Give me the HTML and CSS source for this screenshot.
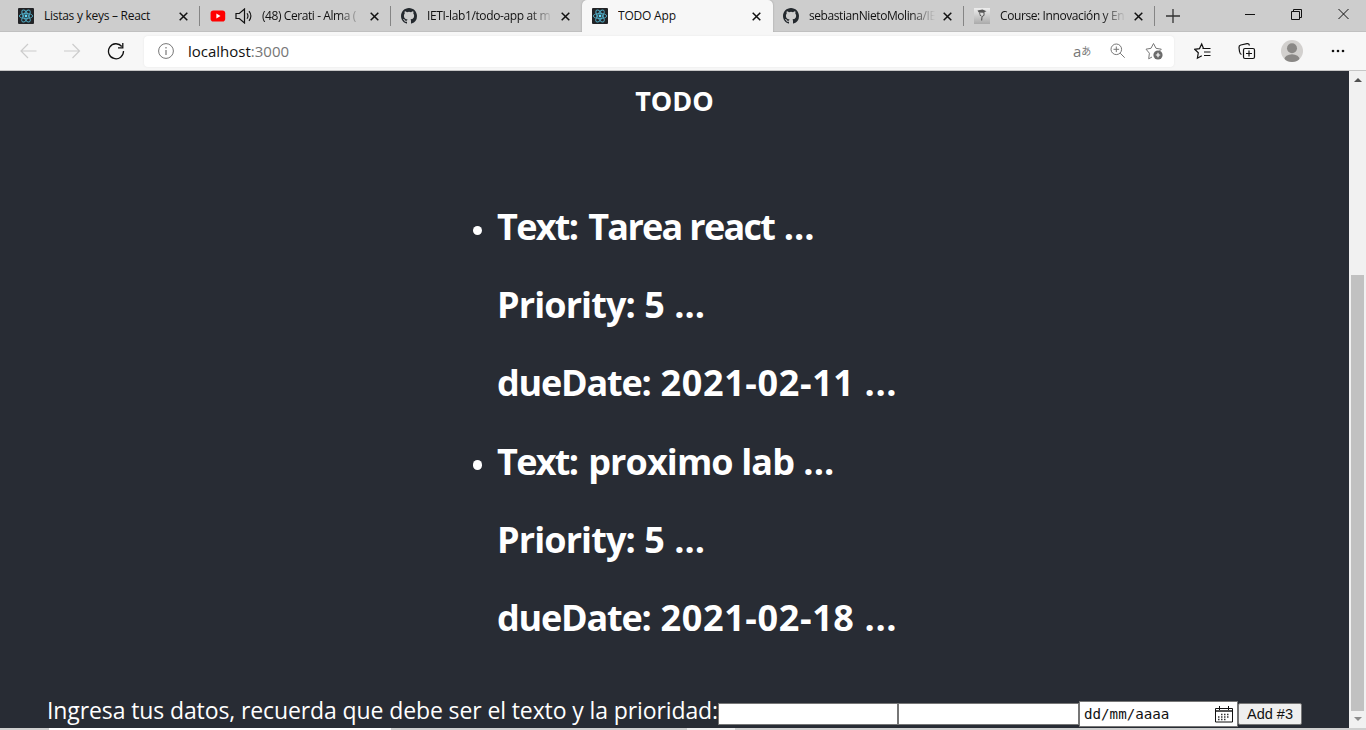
FILE: index.html
```html
<!DOCTYPE html>
<html lang="es">
<head>
<meta charset="utf-8">
<title>TODO App</title>
<link rel="stylesheet" href="styles.css">
</head>
<body>
<svg class="defs" width="0" height="0">
  <symbol id="react" viewBox="0 0 16 16"><rect width="16" height="16" rx="1" fill="#222326"/><g fill="none" stroke="#4fa9c2" stroke-width=".9"><ellipse cx="8" cy="8" rx="6.7" ry="2.6"/><ellipse cx="8" cy="8" rx="6.7" ry="2.6" transform="rotate(60 8 8)"/><ellipse cx="8" cy="8" rx="6.7" ry="2.6" transform="rotate(120 8 8)"/></g><circle cx="8" cy="8" r="1.4" fill="#61dafb"/></symbol>
  <symbol id="github" viewBox="0 0 16 16"><path fill="#24292e" d="M8 0C3.58 0 0 3.58 0 8c0 3.54 2.29 6.53 5.47 7.59.4.07.55-.17.55-.38 0-.19-.01-.82-.01-1.49-2.01.37-2.53-.49-2.69-.94-.09-.23-.48-.94-.82-1.13-.28-.15-.68-.52-.01-.53.63-.01 1.08.58 1.23.82.72 1.21 1.87.87 2.33.66.07-.52.28-.87.51-1.07-1.78-.2-3.64-.89-3.64-3.95 0-.87.31-1.59.82-2.15-.08-.2-.36-1.02.08-2.12 0 0 .67-.21 2.2.82a7.6 7.6 0 0 1 4 0c1.53-1.04 2.2-.82 2.2-.82.44 1.1.16 1.92.08 2.12.51.56.82 1.27.82 2.15 0 3.07-1.87 3.75-3.65 3.95.29.25.54.73.54 1.48 0 1.07-.01 1.93-.01 2.2 0 .21.15.46.55.38A8.01 8.01 0 0 0 16 8c0-4.42-3.58-8-8-8z"/></symbol>
  <symbol id="close" viewBox="0 0 9 9"><path d="M.7.7l7.6 7.6M8.3.7L.7 8.3" stroke="#111" stroke-width="1.5"/></symbol>
</svg>
<header class="tabs">
  <div class="tab"><svg class="fav"><use href="#react"/></svg><span class="label t1">Listas y keys – React</span><svg class="x"><use href="#close"/></svg></div>
  <div class="tab"><svg class="fav youtube" viewBox="0 0 16 16"><rect x=".6" y="2.5" width="14.6" height="11" rx="2.8" fill="#f00"/><path d="M6.4 5.6v4.8L10.5 8z" fill="#fff"/></svg>
    <svg class="sound" viewBox="0 0 18 16"><path d="M1 5.500h3.300L9.500 1v14l-5.200-4.500H1z" fill="none" stroke="#111" stroke-width="1.200"/><path d="M12 5.200q2 2.800 0 5.600M14 3.200q3.800 4.800 0 9.600" fill="none" stroke="#111" stroke-width="1.100"/></svg>
    <span class="label fade t2">(48) Cerati - Alma (</span><svg class="x"><use href="#close"/></svg></div>
  <div class="tab plain late"><svg class="fav"><use href="#github"/></svg><span class="label fade t3">IETI-lab1/todo-app at m</span><svg class="x"><use href="#close"/></svg></div>
  <div class="tab active late"><svg class="fav"><use href="#react"/></svg><span class="label t4">TODO App</span><svg class="x"><use href="#close"/></svg></div>
  <div class="tab late"><svg class="fav"><use href="#github"/></svg><span class="label fade t5">sebastianNietoMolina/IE</span><svg class="x"><use href="#close"/></svg></div>
  <div class="tab late"><svg class="fav" viewBox="0 0 16 16"><defs><linearGradient id="g" x2="0" y2="1"><stop stop-color="#eee"/><stop offset="1" stop-color="#aaa"/></linearGradient></defs><path d="M0 0h16v16H0z" fill="url(#g)"/><path d="M3.500 2.500l5-1 4 1.700-3 1.300-5-.3zM5 4.200h5.500v3L8.500 9l-.3 3.500H7L7.600 8H6z" fill="#555"/><path d="M6 4.800h3.500V7L8 8.200 6.600 7z" fill="#ddd"/></svg><span class="label fade t6">Course: Innovación y En</span><svg class="x"><use href="#close"/></svg></div>
  <svg class="plus" viewBox="0 0 14 14"><path d="M7 0v14M0 7h14" stroke="#333" stroke-width="1.3"/></svg>
  <div class="winctl">
    <svg width="10" height="12" viewBox="0 0 10 12"><path d="M0 6.500h10" stroke="#111"/></svg>
    <svg width="11" height="12" viewBox="0 0 11 12"><path d="M.5 3.500h8v8h-8zM2.500 3V1.500h8v8H9" fill="none" stroke="#111"/></svg>
    <svg width="11" height="12" viewBox="0 0 11 12"><path d="M.5 1l10 10M10.500 1l-10 10" stroke="#111"/></svg>
  </div>
</header>
<nav class="toolbar">
  <svg class="back" width="17" height="16" viewBox="0 0 17 16"><path d="M16.500 8H1M8 1L1 8l7 7" fill="none" stroke="#ccc" stroke-width="1.200"/></svg>
  <svg class="forward" width="17" height="16" viewBox="0 0 17 16"><path d="M0 8h15.500M8.500 1l7 7-7 7" fill="none" stroke="#ccc" stroke-width="1.200"/></svg>
  <svg class="reload" width="18" height="18" viewBox="0 0 18 18"><path d="M14.800 4.500A7.500 7.500 0 1 0 16.500 9M15.800 1v4.800H11" fill="none" stroke="#111" stroke-width="1.300"/></svg>
  <div class="address">
    <svg width="16" height="16" viewBox="0 0 16 16"><circle cx="8" cy="8" r="7.400" fill="none" stroke="#777"/><path d="M8 7v5M8 4v1.500" stroke="#777" stroke-width="1.200"/></svg>
    <span class="url">localhost<span class="port">:3000</span></span>
    <div class="address-tools">
      <span class="translate"><span>a</span><span class="kana">あ</span></span>
      <svg width="16" height="16" viewBox="0 0 16 16"><circle cx="6.300" cy="6.300" r="5.300" fill="none" stroke="#777"/><path d="M3.500 6.300h5.600M6.300 3.500v5.600M10.200 10.200l4.500 4.500" stroke="#777" fill="none"/></svg>
      <svg width="18" height="18" viewBox="0 0 18 18"><path d="M7 15l-3.300 1.800.7-5.600L1 7.200l5-.9L8.500 1.500 11 6.300l5.300.9-2 2" fill="none" stroke="#777"/><circle cx="13" cy="13" r="4.600" fill="#6b6b6b"/><path d="M10.800 13h4.400M13 10.800v4.400" stroke="#fff" stroke-width="1.200"/></svg>
    </div>
  </div>
  <svg class="fav-list" width="18" height="18" viewBox="0 0 18 18"><path d="M9.500 6.500L7.700 2 5.500 6.600l-4.800.7 3.600 3.500-.9 5.400 4.400-2.500M16.500 6.500h-8M10 10h6.500M10 13.500h6.500" fill="none" stroke="#111" stroke-width="1.200"/></svg>
  <svg class="collections" width="18" height="18" viewBox="0 0 18 18"><path d="M3.500 12.500Q2 12 1.500 9.500L1 5.500Q.8 3.500 2.800 3L9 1.600Q11 1.300 11.500 3.500" fill="none" stroke="#111" stroke-width="1.200"/><rect x="5.500" y="6.500" width="11" height="10" rx="1.500" fill="#f7f7f7" stroke="#111" stroke-width="1.200"/><path d="M8 11.500h6M11 8.500v6" stroke="#111" stroke-width="1.200"/></svg>
  <svg class="profile" width="22" height="22" viewBox="0 0 22 22"><clipPath id="pc"><circle cx="11" cy="11" r="11"/></clipPath><g clip-path="url(#pc)"><path fill="#d2d0ce" d="M0 0h22v22H0z"/><circle cx="11" cy="8.300" r="5" fill="#8a8886"/><ellipse cx="11" cy="19.500" rx="7.700" ry="5.300" fill="#8a8886"/></g></svg>
  <svg class="more" width="14" height="4" viewBox="0 0 14 4"><g fill="#111"><circle cx="2" cy="2" r="1.300"/><circle cx="7" cy="2" r="1.300"/><circle cx="12" cy="2" r="1.300"/></g></svg>
</nav>
<div class="viewport">
  <main class="app">
    <h1 class="title"><span>TODO</span></h1>
    <ul class="todos">
      <li><p class="text"><span class="key">Text:</span> <span class="tight">Tarea react</span> ...</p><p><span class="priority">Priority:</span> 5 ...</p><p><span class="due">dueDate:</span> <span class="value">2021-02-11 ...</span></p></li>
      <li><p class="text"><span class="key">Text:</span> <span class="snug">proximo lab</span> ...</p><p><span class="priority">Priority:</span> 5 ...</p><p><span class="due">dueDate:</span> <span class="value">2021-02-18 ...</span></p></li>
    </ul>
    <form class="entry">
      <label>Ingresa tus datos, recuerda que debe ser el texto y la prioridad:</label>
      <div class="field"></div><div class="field second"></div>
      <div class="date"><span>dd/mm/aaaa</span><svg width="18" height="17" viewBox="0 0 18 17"><path d="M.5 2.500h17v13.500H.5zM4.500 0v4M13.500 0v4" fill="none" stroke="#111"/><path d="M1 5h16" stroke="#555" stroke-width="2"/><path d="M6 8.500h9M3 11h12M3 13.500h9" stroke="#333" stroke-width="1.500" stroke-dasharray="1.500 1.500"/></svg></div>
      <button type="button">Add #3</button>
    </form>
  </main>
  <aside class="scrollbar"><i class="up"></i><div class="thumb"></div><i class="down"></i></aside>
</div>
<footer class="edge"><i class="e1"></i><i class="e2"></i></footer>
</body>
</html>
```
FILE: styles.css
```css
* { box-sizing: border-box; }
body { margin: 0; width: 1366px; height: 730px; overflow: hidden; display: flex; flex-direction: column; font-family: "Open Sans", "Noto Sans", sans-serif; }
svg { display: block; flex: none; }
.defs { position: absolute; }

.tabs { height: 32px; background: #cdcdcd; box-shadow: inset 0 -1px #c0c0c0; display: flex; padding-left: 9px; flex: none; }
.tab { position: relative; width: 191px; height: 32px; display: flex; align-items: center; padding: 0 12px 0 9px; font-size: 12px; color: #111; flex: none; }
.tab.late { padding-left: 10px; }
.tab::after { content: ""; position: absolute; right: 0; top: 6px; width: 1px; height: 20px; background: #858585; }
.tab.plain::after, .tab.active::after { display: none; }
.active { background: #f7f7f7; border-radius: 5px 5px 0 0; box-shadow: 0 0 2px #999; clip-path: inset(0 -3px 0 -3px); }
.fav { width: 16px; height: 16px; margin-right: 10px; }
.youtube { margin-left: 1px; margin-right: 9px; }
.sound { width: 18px; height: 16px; margin-right: 9px; }
.label { flex: 1; white-space: nowrap; overflow: hidden; line-height: 18px; }
.fade { -webkit-mask-image: linear-gradient(90deg, #000 calc(100% - 26px), transparent calc(100% - 2px)); mask-image: linear-gradient(90deg, #000 calc(100% - 26px), transparent calc(100% - 2px)); }
.x { width: 9px; height: 9px; margin-left: 6px; }
.t1 { letter-spacing: -.27px; }
.t2 { letter-spacing: -.42px; }
.t3 { letter-spacing: -.37px; }
.t4 { letter-spacing: -.2px; }
.t5 { letter-spacing: -.42px; }
.t6 { letter-spacing: -.4px; }
.plus { width: 14px; height: 14px; margin: 9px 0 0 11px; }
.winctl { margin-left: auto; padding: 8px 17px 0 0; display: flex; gap: 36px; }

.toolbar { height: 39px; background: #f7f7f7; border-bottom: 1px solid #c6c6c6; display: flex; align-items: center; padding-left: 20px; flex: none; }
.forward { margin-left: 27px; }
.reload { margin-left: 26px; }
.address { margin-left: 19px; width: 1030px; height: 31px; border-radius: 4px; background: #fff; box-shadow: 0 0 2px #e4e4e4; display: flex; align-items: center; padding: 0 11px 0 14px; }
.url { margin-left: 14px; font-size: 15px; line-height: 22px; color: #111; letter-spacing: 0; }
.port { color: #767676; }
.address-tools { margin-left: auto; display: flex; align-items: center; gap: 19px; }
.translate { display: flex; align-items: center; width: 18px; color: #777; font-size: 15px; line-height: 16px; }
.kana { font: 10px/16px "Noto Sans CJK JP", sans-serif; }
.fav-list { margin-left: 20px; }
.collections { margin-left: 26px; }
.profile { margin-left: 25px; }
.more { margin-left: 28px; }

.viewport { height: 657px; display: flex; flex: none; background: #282c34; color: #fff; }
.app { width: 1349px; overflow: hidden; }
.title { margin: 0; height: 60px; text-align: center; font-size: 27px; line-height: 60px; font-weight: 700; }
.todos { margin: 0; padding: 57px 0 0 497px; list-style: none; font-weight: 700; font-size: 36px; }
.todos li { position: relative; height: 234.600px; }
.todos li::before { content: ""; position: absolute; left: -24.500px; top: 37.500px; width: 9.500px; height: 9.500px; border-radius: 50%; background: #fff; }
.todos p { margin: 0; height: 78.200px; line-height: 78px; white-space: nowrap; }
.key { letter-spacing: -1.700px; }
.text .key { margin-right: 1.500px; }
.tight { letter-spacing: -1.700px; }
.snug { letter-spacing: -.9px; }
.priority { letter-spacing: -.9px; }
.due { letter-spacing: -1.200px; margin-right: .5px; }
.value { letter-spacing: .62px; }
.entry { display: flex; padding: 39px 0 0 47px; height: 68px; }
.entry label { width: 671px; margin-top: -4px; font-size: 23px; line-height: 36px; white-space: nowrap; letter-spacing: -.11px; }
.field { width: 180px; height: 22px; margin-top: 7px; background: #fff; border: 1px solid #767676; }
.second { width: 181px; }
.date { width: 159px; height: 26px; margin-top: 5px; background: #fff; border: 1px solid #767676; color: #111; display: flex; align-items: center; justify-content: space-between; padding: 0 4px; font: 14.200px/20px "DejaVu Sans Mono", monospace; }
.entry button { width: 64px; height: 22px; margin-top: 7px; padding: 0; background: #efefef; border: 1px solid #767676; border-radius: 2px; color: #111; font: 14.500px/18px "Liberation Sans", sans-serif; }

.scrollbar { width: 17px; background: #f1f1f1; display: flex; flex-direction: column; align-items: center; padding: 7px 0; }
.up, .down { border: 4px solid transparent; width: 0; height: 0; }
.up { border-top: 0; border-bottom-color: #505050; }
.down { border-bottom: 0; border-top-color: #8c8c8c; margin-top: auto; }
.thumb { width: 13px; height: 436px; margin-top: 193px; background: #c1c1c1; }

.edge { height: 2px; flex: none; display: flex; background: #cfcfcf; padding-left: 49px; }
.e1 { width: 342px; background: #fff; }
.e2 { width: 48px; margin-left: 296px; background: #f0f0f0; }
```
